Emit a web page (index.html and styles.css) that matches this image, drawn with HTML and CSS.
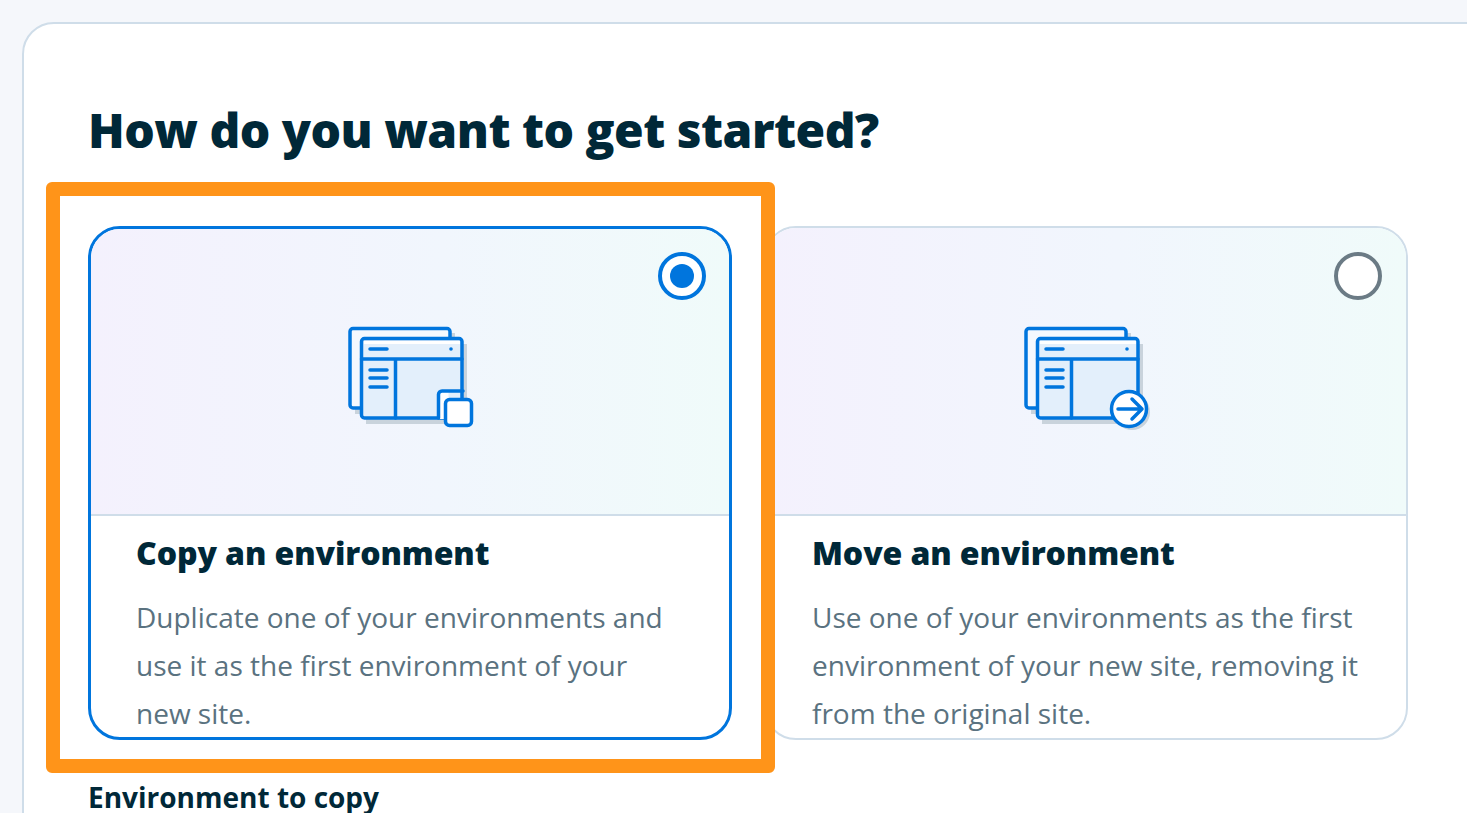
FILE: index.html
```html
<!DOCTYPE html>
<html lang="en">
<head>
  <meta charset="UTF-8">
  <title>How do you want to get started?</title>
  <link rel="stylesheet" href="styles.css">
</head>
<body>
<div class="panel">
  <h1>How do you want to get started?</h1>
  <div class="options">
    <!--copy-->
    <div class="option selected">
      <div class="highlight"></div>
      <div class="art">
        <span class="radio"></span>
        <svg class="icon" width="130" height="110" viewBox="0 0 130 110" fill="none" stroke-linejoin="round" stroke-linecap="round">
          <path class="shade" d="M10 11h100v81H10zM21 22h101v80H21z"/>
          <rect class="win-back" x="5" y="6.5" width="100" height="79.5" rx="3"/>
          <rect class="win" x="16.5" y="16.5" width="100.5" height="79.5" rx="3"/>
          <path class="bright" d="M19 19h96v3H19z"/>
          <path class="line" d="M16.5 37H117M50.5 37v59M25 27h17M25 48h17M25 56h17M25 65h17"/>
          <circle class="dot" cx="106" cy="27" r="1.8"/>
          <path class="cut" d="M118 69H97a3.5 3.5 0 0 0-3.500 3.500V97h10v-28z"/>
          <path class="line" d="M118 69H97a3.500 3.500 0 0 0-3.500 3.500V96"/>
          <rect class="front" x="100.5" y="77.5" width="26" height="26" rx="4"/>
        </svg>
      </div>
      <div class="info">
        <h2>Copy an environment</h2>
        <p>Duplicate one of your environments and use it as the first environment of your new site.</p>
      </div>
    </div>
    <!--move-->
    <div class="option">
      <div class="art">
        <span class="radio"></span>
        <svg class="icon" width="130" height="110" viewBox="0 0 130 110" fill="none" stroke-linejoin="round" stroke-linecap="round">
          <path class="shade" d="M10 11h100v81H10zM21 22h101v80H21z"/>
          <rect class="win-back" x="5" y="6.5" width="100" height="79.5" rx="3"/>
          <rect class="win" x="16.5" y="16.5" width="100.5" height="79.5" rx="3"/>
          <path class="bright" d="M19 19h96v3H19z"/>
          <path class="line" d="M16.5 37H117M50.5 37v59M25 27h17M25 48h17M25 56h17M25 65h17"/>
          <circle class="dot" cx="106" cy="27" r="1.8"/>
          <circle class="shade" cx="111" cy="90" r="18"/>
          <circle class="front" cx="108" cy="87" r="17.5"/>
          <path class="line" d="M97 87h24M111 77l10 10-10 10"/>
        </svg>
      </div>
      <div class="info">
        <h2>Move an environment</h2>
        <p>Use one of your environments as the first environment of your new site, removing it from the original site.</p>
      </div>
    </div>
  </div>
  <label class="field-label">Environment to copy</label>
</div>
</body>
</html>
```

FILE: styles.css
```css
* {
  margin: 0;
  padding: 0;
  box-sizing: border-box;
}

body {
  height: 813px;
  overflow: hidden;
  padding: 22px 0 0 22px;
  background: #f5f7fb;
  font-family: "Open Sans", "Liberation Sans", sans-serif;
}

.panel {
  width: 1600px;
  height: 900px;
  padding: 75px 64px 0;
  background: #ffffff;
  border: 2px solid #cfdde9;
  border-radius: 32px;
}

h1 {
  height: 62px;
  font-size: 48px;
  line-height: 62px;
  font-weight: 800;
  letter-spacing: -0.52px;
  color: #002838;
}

.options {
  display: flex;
  gap: 32px;
  margin-top: 65px;
}

.option {
  position: relative;
  display: flex;
  flex-direction: column;
  width: 644px;
  height: 514px;
  background: #ffffff;
  border: 2px solid #cfdde9;
  border-radius: 32px;
}

.option.selected {
  border: 3px solid #0075dd;
  z-index: 1;
}

/*orange box drawn over the selected card*/
.highlight {
  position: absolute;
  top: -47px;
  left: -45px;
  right: -46px;
  bottom: -36px;
  border: 14px solid #ff9419;
  border-radius: 6px;
  pointer-events: none;
}

.art {
  position: relative;
  display: flex;
  justify-content: center;
  padding-top: 94px;
  flex: none;
  height: 288px;
  background: linear-gradient(90deg, #f4f1fd 0%, #f1f6fd 55%, #f0fbfa 100%);
  border-bottom: 2px solid #cfdde9;
  border-radius: 30px 30px 0 0;
}

.selected .art {
  height: 287px;
  padding-top: 93px;
  border-radius: 29px 29px 0 0;
}

.radio {
  position: absolute;
  top: 24px;
  right: 24px;
  width: 48px;
  height: 48px;
  background: #ffffff;
  border: 4px solid #6b7b85;
  border-radius: 50%;
}

.selected .radio {
  top: 23px;
  right: 23px;
  border-color: #0075dd;
}

.selected .radio::after {
  content: "";
  position: absolute;
  top: 8px;
  left: 8px;
  width: 24px;
  height: 24px;
  background: #0075dd;
  border-radius: 50%;
}

.icon .shade {
  fill: #c9d3dc;
}

.icon .win-back {
  fill: #f4f8fe;
  stroke: #0075dd;
  stroke-width: 3.5;
}

.icon .win {
  fill: #e3effb;
  stroke: #0075dd;
  stroke-width: 3.5;
}

.icon .bright {
  fill: #ffffff;
}

.icon .line {
  stroke: #0075dd;
  stroke-width: 3.5;
}

.icon .dot {
  fill: #0075dd;
}

.icon .cut {
  fill: #ffffff;
}

.icon .front {
  fill: #ffffff;
  stroke: #0075dd;
  stroke-width: 3.5;
}

.info {
  padding: 15px 46px 0;
  overflow: hidden;
}

.selected .info {
  padding-left: 45px;
}

h2 {
  font-size: 32px;
  line-height: 44px;
  font-weight: 800;
  letter-spacing: -0.1px;
  color: #002838;
}

.info p {
  margin-top: 18px;
  font-size: 28px;
  line-height: 48px;
  color: #5a7280;
}

.field-label {
  display: block;
  margin-top: 38px;
  font-size: 28px;
  line-height: 38px;
  font-weight: 700;
  color: #002838;
}
```
